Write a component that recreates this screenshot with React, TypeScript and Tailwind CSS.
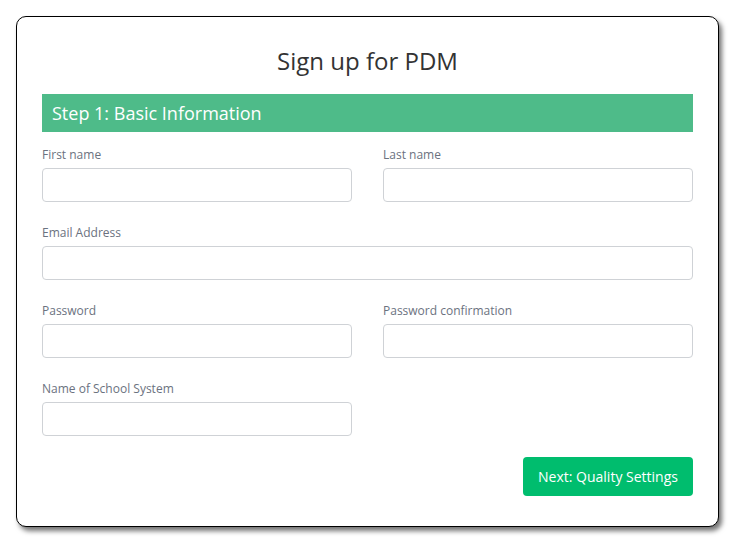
const font = { fontFamily: '"Open Sans", "Liberation Sans", sans-serif' };

function Field({ label }: { label: string }) {
  return (
    <div className="flex flex-col">
      <label className="mb-[5px] text-[12px] leading-[16px] text-[#6b7280]">{label}</label>
      <input className="h-[34px] w-full rounded-[4px] border border-[#cfd2d6] bg-white px-2 text-sm outline-none" />
    </div>
  );
}

export default function App() {
  return (
    <div className="h-[550px] w-[738px] bg-white pl-4 pt-4" style={font}>
      <div className="w-[703px] rounded-[10px] border-[1.5px] border-black bg-white px-[25px] pb-[30px] pt-[28px] shadow-[3px_4px_5px_rgba(0,0,0,0.55)]">
        <h1 className="text-center text-[24px] leading-[32px] text-[#333]">Sign up for PDM</h1>
        <div className="mt-[17px] flex h-[38px] items-center bg-[#4ebb89] px-[10px] text-[18px] text-white">
          Step 1: Basic Information
        </div>
        <div className="mt-[15px] grid grid-cols-2 gap-x-[31px] gap-y-[23px]">
          <Field label="First name" />
          <Field label="Last name" />
          <div className="col-span-2">
            <Field label="Email Address" />
          </div>
          <Field label="Password" />
          <Field label="Password confirmation" />
          <Field label="Name of School System" />
        </div>
        <div className="mt-[21px] flex justify-end">
          <button className="h-[39px] w-[170px] rounded-[4px] bg-[#00bd6e] text-[14px] text-white">
            Next: Quality Settings
          </button>
        </div>
      </div>
    </div>
  );
}
